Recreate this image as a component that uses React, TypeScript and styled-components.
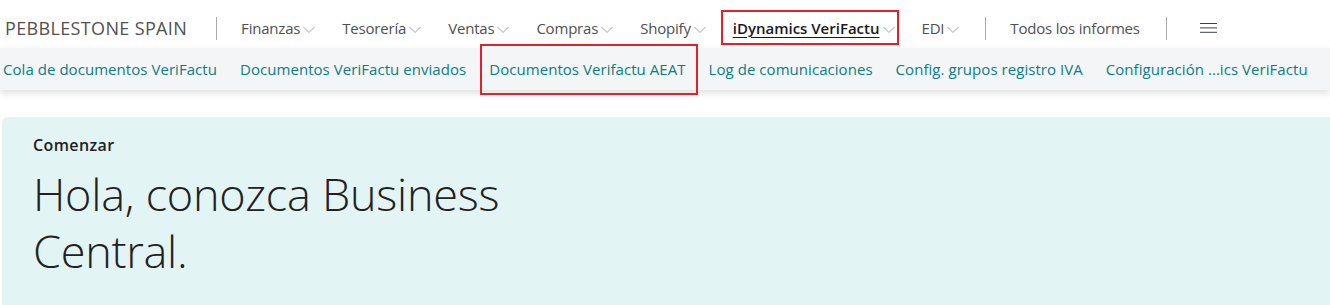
import React from "react";
import styled, { createGlobalStyle } from "styled-components";

const GlobalStyle = createGlobalStyle`
  html, body {
    margin: 0;
    padding: 0;
    background: #ffffff;
    font-family: "Open Sans", "Noto Sans", sans-serif;
    overflow: hidden;
  }
`;

const Page = styled.div`
  width: 1330px;
  height: 305px;
  background: #ffffff;
  overflow: hidden;
`;

const TopBar = styled.div`
  display: flex;
  align-items: center;
  box-sizing: border-box;
  height: 48px;
  padding: 8px 0 0 5px;
  background: #ffffff;
`;

const Company = styled.div`
  font-size: 18px;
  letter-spacing: 0.35px;
  color: #505050;
  padding-right: 29px;
  white-space: nowrap;
`;

const Divider = styled.div<{ $left?: number; $right?: number }>`
  flex: none;
  width: 1px;
  height: 23px;
  background: #a9a9a9;
  margin-left: ${(p) => p.$left ?? 22}px;
  margin-right: ${(p) => p.$right ?? 12}px;
`;

const NavList = styled.div`
  display: flex;
  align-items: center;
  gap: 11px;
`;

const NavItem = styled.div<{ $active?: boolean }>`
  position: relative;
  display: flex;
  align-items: center;
  height: 40px;
  padding: 0 4px 0 12px;
  font-size: 15px;
  letter-spacing: -0.2px;
  white-space: nowrap;
  color: ${(p) => (p.$active ? "#1a1a1a" : "#505050")};
  font-weight: ${(p) => (p.$active ? 600 : 400)};

  ${(p) =>
    p.$active &&
    `
    letter-spacing: 0;
    span { text-decoration: underline; text-underline-offset: 3px; text-decoration-thickness: 1px; }
    &::after {
      content: "";
      position: absolute;
      left: 0;
      right: 0;
      top: 2px;
      bottom: 3px;
      border: 2px solid #e3212b;
    }
  `}
`;

const Chevron = styled.svg`
  margin-left: 3px;
  margin-top: 3px;
  flex: none;
`;

const Hamburger = styled.svg`
  margin-left: 21px;
  flex: none;
`;

const SubBar = styled.div`
  position: relative;
  display: flex;
  align-items: center;
  height: 42px;
  padding-left: 3px;
  gap: 23px;
  background: #f4f5f7;
  box-shadow: 0 3px 7px rgba(0, 0, 0, 0.13);
`;

const SubLink = styled.div<{ $marked?: boolean }>`
  position: relative;
  font-size: 15px;
  letter-spacing: 0.05px;
  color: #0b7d85;
  white-space: nowrap;

  ${(p) =>
    p.$marked &&
    `
    &::after {
      content: "";
      position: absolute;
      left: -9px;
      right: -12px;
      top: -15px;
      bottom: -16px;
      border: 2px solid #e3212b;
    }
  `}
`;

const Content = styled.div`
  padding: 27px 0 0 2px;
`;

const Card = styled.div`
  background: #e3f4f4;
  border-radius: 6px 0 0 0;
  height: 200px;
  padding: 17px 0 0 31px;
  color: #212121;
`;

const Eyebrow = styled.div`
  font-size: 16px;
  font-weight: 600;
  letter-spacing: 0.4px;
  line-height: 22px;
`;

const Heading = styled.h1`
  margin: 9px 0 0;
  max-width: 520px;
  font-size: 45px;
  font-weight: 300;
  letter-spacing: -0.25px;
  line-height: 57px;
`;

const ChevronIcon = () => (
  <Chevron width="12" height="8" viewBox="0 0 12 8">
    <polyline points="0.5,1 6,6.5 11.5,1" fill="none" stroke="#a3a3a3" strokeWidth="1" />
  </Chevron>
);

const menus = ["Finanzas", "Tesorería", "Ventas", "Compras", "Shopify"];

const subLinks = [
  "Cola de documentos VeriFactu",
  "Documentos VeriFactu enviados",
  "Documentos Verifactu AEAT",
  "Log de comunicaciones",
  "Config. grupos registro IVA",
  "Configuración ...ics VeriFactu",
];

const App = () => {
  return (
    <Page>
      <GlobalStyle />
      <TopBar>
        <Company>PEBBLESTONE SPAIN</Company>
        <Divider $left={0} />
        <NavList>
          {menus.map((m) => (
            <NavItem key={m}>
              <span>{m}</span>
              <ChevronIcon />
            </NavItem>
          ))}
          <NavItem $active>
            <span>iDynamics VeriFactu</span>
            <ChevronIcon />
          </NavItem>
          <NavItem>
            <span>EDI</span>
            <ChevronIcon />
          </NavItem>
        </NavList>
        <Divider />
        <NavItem>
          <span>Todos los informes</span>
        </NavItem>
        <Divider />
        <Hamburger width="17" height="10" viewBox="0 0 17 10">
          <line x1="0" y1="0.5" x2="17" y2="0.5" stroke="#3b3f46" strokeWidth="1" />
          <line x1="0" y1="4.9" x2="17" y2="4.9" stroke="#3b3f46" strokeWidth="1" />
          <line x1="0" y1="9.3" x2="17" y2="9.3" stroke="#3b3f46" strokeWidth="1" />
        </Hamburger>
      </TopBar>
      <SubBar>
        {subLinks.map((s) => (
          <SubLink key={s} $marked={s === "Documentos Verifactu AEAT"}>
            {s}
          </SubLink>
        ))}
      </SubBar>
      <Content>
        <Card>
          <Eyebrow>Comenzar</Eyebrow>
          <Heading>Hola, conozca Business Central.</Heading>
        </Card>
      </Content>
    </Page>
  );
};

export default App;
